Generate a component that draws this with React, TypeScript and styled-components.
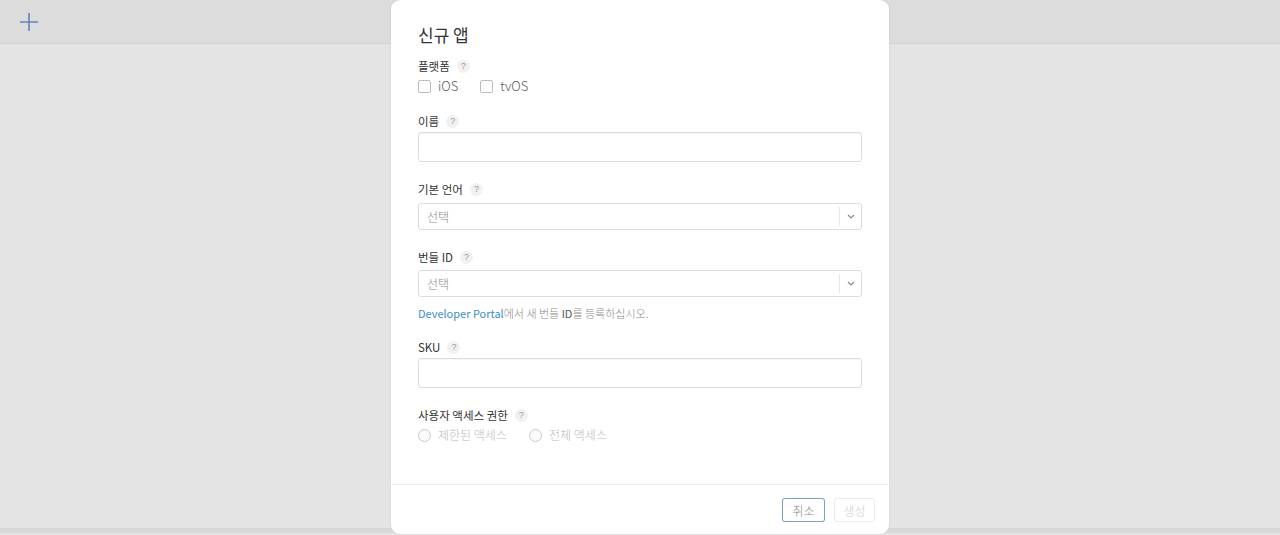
import React from "react";
import styled, { createGlobalStyle } from "styled-components";

const Global = createGlobalStyle`
  html, body { margin: 0; padding: 0; }
  body { font-family: "Noto Sans CJK KR", "Noto Sans", "Liberation Sans", sans-serif; background: #e4e4e4; }
  #root { height: 535px; }
`;

const Page = styled.div`
  position: relative;
  height: 535px;
  overflow: hidden;
  background: #e4e4e4;
  display: flex;
  flex-direction: column;
`;

const TopBar = styled.div`
  height: 43px;
  background: #dcdcdc;
  border-bottom: 1px solid #d2d2d2;
  display: flex;
  align-items: center;
  padding-left: 19px;
  flex-shrink: 0;
`;

const Content = styled.div`
  flex: 1;
`;

const BottomLine = styled.div`
  height: 4px;
  background: #dadada;
  border-top: 1px solid #d4d4d4;
  margin-bottom: 2px;
`;

const Modal = styled.div`
  position: absolute;
  left: 391px;
  top: 0;
  width: 498px;
  height: 534px;
  background: #fff;
  border-radius: 9px;
  box-shadow: 0 0 3px rgba(0, 0, 0, 0.08);
  display: flex;
  flex-direction: column;
`;

const Body = styled.div`
  flex: 1;
  padding: 24px 27px 0 27px;
  display: flex;
  flex-direction: column;
`;

const Title = styled.h1`
  margin: 0;
  font-size: 17px;
  line-height: 22px;
  font-weight: 400;
  color: #333;
`;

const Field = styled.div<{ $mt: number }>`
  margin-top: ${(p) => p.$mt}px;
  display: flex;
  flex-direction: column;
`;

const Label = styled.div<{ $mb: number }>`
  display: flex;
  align-items: center;
  gap: 7px;
  font-size: 11.5px;
  line-height: 16px;
  font-weight: 400;
  color: #333;
  margin-bottom: ${(p) => p.$mb}px;
`;

const Help = styled.span`
  width: 13px;
  height: 13px;
  border-radius: 50%;
  background: #f1f1f1;
  color: #9a9a9a;
  font-size: 9px;
  line-height: 13px;
  text-align: center;
  font-family: "Liberation Sans", sans-serif;
`;

const OptionRow = styled.div`
  display: flex;
  gap: 22px;
  height: 18px;
  align-items: center;
`;

const Option = styled.label<{ $disabled?: boolean }>`
  display: flex;
  align-items: center;
  gap: 7px;
  font-size: ${(p) => (p.$disabled ? "12px" : "13px")};
  color: ${(p) => (p.$disabled ? "#bababa" : "#5a5a5a")};
  font-weight: 300;
  line-height: 18px;
`;

const Box = styled.span`
  width: 11px;
  height: 11px;
  border: 1px solid #bdbdbd;
  border-radius: 2px;
  background: #fff;
  display: inline-block;
`;

const Radio = styled.span`
  width: 11px;
  height: 11px;
  border: 1px solid #c9c9c9;
  border-radius: 50%;
  background: #fbfbfb;
  display: inline-block;
`;

const TextInput = styled.div`
  height: 30px;
  box-sizing: border-box;
  border: 1px solid #dcdcdc;
  border-radius: 3px;
  box-shadow: inset 0 1px 1px rgba(0, 0, 0, 0.03);
`;

const Select = styled.div`
  height: 27px;
  box-sizing: border-box;
  border: 1px solid #dcdcdc;
  border-radius: 3px;
  display: flex;
  align-items: center;
`;

const SelectText = styled.span`
  flex: 1;
  padding-left: 8px;
  font-size: 12px;
  font-weight: 300;
  color: #888;
`;

const Chevron = styled.span`
  width: 21px;
  height: 19px;
  border-left: 1px solid #e6e6e6;
  display: flex;
  align-items: center;
  justify-content: center;
`;

const Hint = styled.div`
  margin-top: 8px;
  font-size: 11px;
  line-height: 16px;
  font-weight: 300;
  color: #8a8a8a;
`;

const Link = styled.span`
  color: #3b8ec6;
  font-weight: 400;
`;

const Strong = styled.span`
  color: #555;
  font-weight: 400;
`;

const Footer = styled.div`
  border-top: 1px solid #eeeeee;
  height: 50px;
  display: flex;
  justify-content: flex-end;
  align-items: flex-start;
  gap: 9px;
  padding: 13px 14px 0 0;
  box-sizing: border-box;
`;

const Button = styled.button<{ $primary?: boolean }>`
  height: 24px;
  width: ${(p) => (p.$primary ? "43px" : "41px")};
  padding: 0;
  border-radius: 3px;
  background: #fff;
  font-family: inherit;
  font-size: 12px;
  font-weight: 300;
  border: 1px solid ${(p) => (p.$primary ? "#78a9b2" : "#ececec")};
  color: ${(p) => (p.$primary ? "#888" : "#d0d0d0")};
  box-shadow: ${(p) => (p.$primary ? "0 0 1px rgba(80,150,165,0.4)" : "none")};
`;

const ChevronIcon = () => (
  <svg width="8" height="5" viewBox="0 0 8 5">
    <path d="M1 1 L4 4 L7 1" fill="none" stroke="#888" strokeWidth="1.1" />
  </svg>
);

const PlusIcon = () => (
  <svg width="20" height="20" viewBox="0 0 20 20">
    <path d="M10 1 V19 M1 10 H19" stroke="#5d86b6" strokeWidth="1.6" />
  </svg>
);

export default function App() {
  return (
    <>
      <Global />
      <Page>
        <TopBar>
          <PlusIcon />
        </TopBar>
        <Content />
        <BottomLine />
        <Modal>
          <Body>
            <Title>신규 앱</Title>
            <Field $mt={12}>
              <Label $mb={3}>
                플랫폼 <Help>?</Help>
              </Label>
              <OptionRow>
                <Option>
                  <Box /> iOS
                </Option>
                <Option>
                  <Box /> tvOS
                </Option>
              </OptionRow>
            </Field>
            <Field $mt={18}>
              <Label $mb={3}>
                이름 <Help>?</Help>
              </Label>
              <TextInput />
            </Field>
            <Field $mt={19}>
              <Label $mb={6}>
                기본 언어 <Help>?</Help>
              </Label>
              <Select>
                <SelectText>선택</SelectText>
                <Chevron>
                  <ChevronIcon />
                </Chevron>
              </Select>
            </Field>
            <Field $mt={19}>
              <Label $mb={5}>
                번들 ID <Help>?</Help>
              </Label>
              <Select>
                <SelectText>선택</SelectText>
                <Chevron>
                  <ChevronIcon />
                </Chevron>
              </Select>
              <Hint>
                <Link>Developer Portal</Link>에서 새 번들 <Strong>ID</Strong>를 등록하십시오.
              </Hint>
            </Field>
            <Field $mt={18}>
              <Label $mb={3}>
                SKU <Help>?</Help>
              </Label>
              <TextInput />
            </Field>
            <Field $mt={19}>
              <Label $mb={3}>
                사용자 액세스 권한 <Help>?</Help>
              </Label>
              <OptionRow>
                <Option $disabled>
                  <Radio /> 제한된 액세스
                </Option>
                <Option $disabled>
                  <Radio /> 전체 액세스
                </Option>
              </OptionRow>
            </Field>
          </Body>
          <Footer>
            <Button $primary>취소</Button>
            <Button>생성</Button>
          </Footer>
        </Modal>
      </Page>
    </>
  );
}
